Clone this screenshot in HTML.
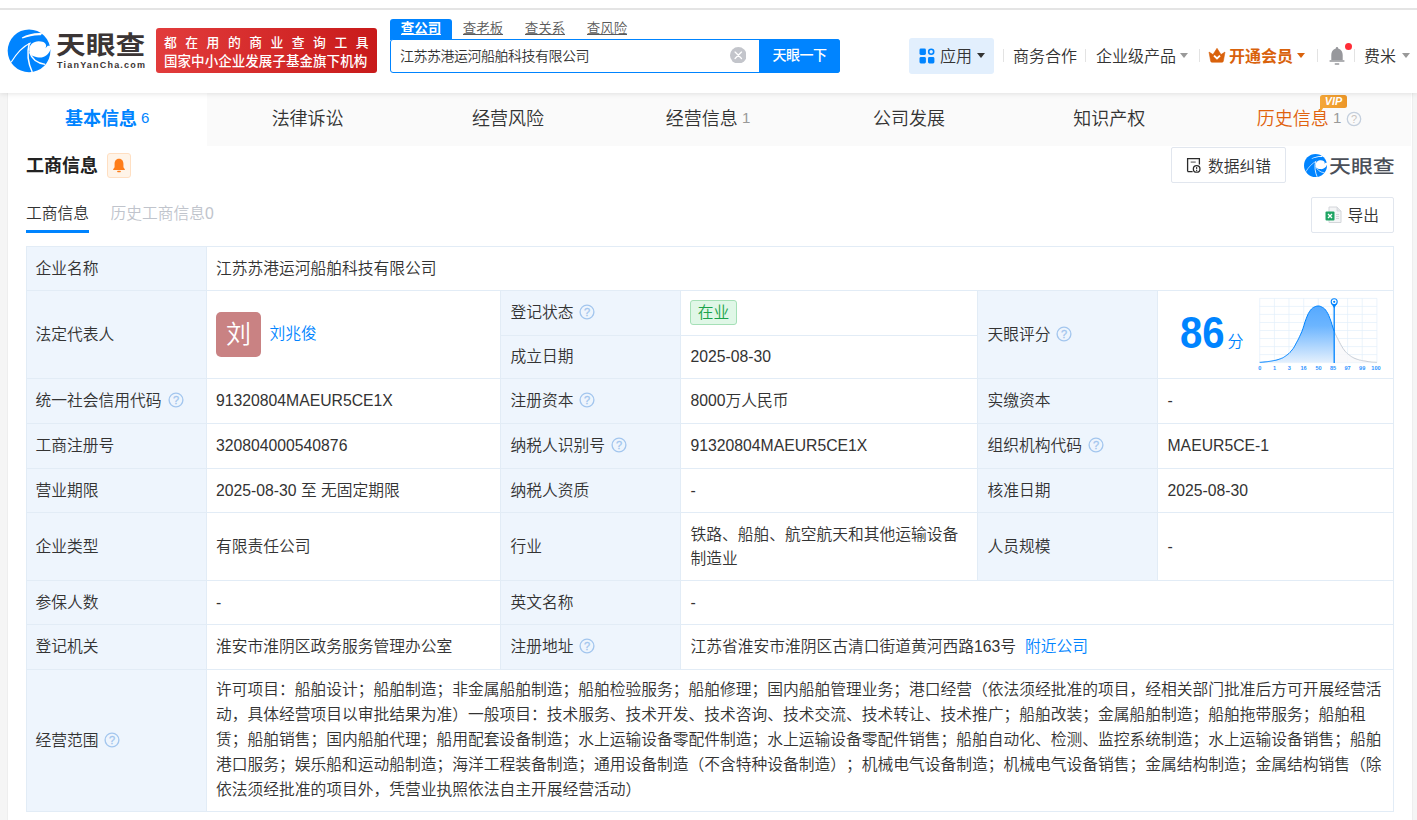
<!DOCTYPE html>
<html lang="zh-CN">
<head>
<meta charset="utf-8">
<title>天眼查</title>
<style>
*{box-sizing:border-box;margin:0;padding:0}
html,body{width:1417px;height:820px;overflow:hidden}
body{font-weight:350;text-spacing-trim:space-all;background:#f5f5f5;font-family:"Liberation Sans","Noto Sans CJK SC",sans-serif;color:#333;font-size:16px;position:relative}
.abs{position:absolute;white-space:nowrap}
#header{position:absolute;left:0;top:0;width:1417px;height:93px;background:#fff;box-shadow:0 1px 5px rgba(0,0,0,.10);z-index:5}
#topline{position:absolute;left:0;top:8px;width:1417px;height:2px;background:#e4e4e4}
#panel{position:absolute;left:7px;top:93px;width:1406px;height:727px;background:#fff;border-left:1px solid #eee;border-right:1px solid #eee}
#tabbar{position:absolute;left:0;top:0;width:1403px;height:53px;background:#fafafa}
#tabbar .act{position:absolute;left:0;top:0;width:199px;height:53px;background:#fff}
.tab{position:absolute;top:0;height:53px;line-height:53px;font-size:18px;color:#333;white-space:nowrap}

#logo{position:absolute;left:0;top:20px;width:80px;height:60px}
#wm{position:absolute;left:56px;top:26px;font-size:25.5px;transform:scaleX(1.165);font-weight:700;color:#3b3535;line-height:38px;letter-spacing:0;white-space:nowrap;transform-origin:0 50%}
#wm2{position:absolute;left:57px;top:59.2px;font-size:9px;font-weight:700;color:#3b3535;line-height:12px;letter-spacing:1.2px;white-space:nowrap}
#banner{position:absolute;left:156px;top:28px;width:221px;height:45px;border-radius:3px;background:linear-gradient(90deg,#e23c3c,#c81a1a);color:#fff;font-weight:700}
#banner div{position:absolute;left:8px;white-space:nowrap;line-height:18px}
#b1{top:5.5px;font-size:12.8px;letter-spacing:8.5px;font-weight:500}
#b2{top:24.5px;font-size:13.5px;letter-spacing:.05px;font-weight:500}
.stab{position:absolute;top:19px;height:21px;width:62px;text-align:center;font-size:13.5px;line-height:20px;color:#5a5a5a;letter-spacing:0}
.stab u{text-decoration:none;display:inline-block;line-height:10.6px;border-bottom:1px solid currentColor;vertical-align:middle;position:relative;top:0px}
#st1{left:390px;background:#0084ff;color:#fff;font-weight:700;border-radius:3px 3px 0 0}
#sbox{position:absolute;left:390px;top:39px;width:450px;height:34px;border:1.5px solid #0084ff;border-radius:3px;background:#fff}
#sbox .q{position:absolute;left:9px;top:.5px;line-height:31px;font-size:14px;letter-spacing:-.5px;color:#333;white-space:nowrap}
#sbtn{position:absolute;left:759px;top:39px;width:81px;height:34px;background:#0084ff;color:#fff;font-size:14px;font-weight:500;text-align:center;line-height:33px;border-radius:0 3px 3px 0;letter-spacing:-.5px}
#sclr{position:absolute;left:729.5px;top:46.8px;width:16.6px;height:16.6px}
.nav{position:absolute;top:44.5px;line-height:24px;font-size:16px;color:#333;white-space:nowrap}
.sep{position:absolute;top:49px;width:1px;height:13px;background:#e3e3e3}
.caret{position:absolute;top:53px;width:0;height:0;border-left:4px solid transparent;border-right:4px solid transparent;border-top:5px solid #999}
#app{position:absolute;left:909px;top:38px;width:85px;height:36px;background:#e2effd;border-radius:3px}
.t{position:absolute;white-space:nowrap;font-size:15.75px;line-height:24px;color:#333;font-weight:350}
.hi{position:absolute;width:16px;height:16px}
.cnt{font-size:15px;font-weight:400;position:relative;top:-1.6px}
.cnt.g{color:#999}
.tab{text-align:center}
#vip{position:absolute;left:1312px;top:2.2px;width:27px;height:12.8px;background:linear-gradient(90deg,#f5a838,#ec9628);color:#fff;font-size:10.8px;font-weight:700;font-style:italic;line-height:13px;text-align:center;border-radius:2.5px;z-index:2;font-family:"Liberation Sans",sans-serif;letter-spacing:0}
#vip:after{content:"";position:absolute;left:0;top:10px;border-left:0 solid transparent;border-right:5px solid transparent;border-top:8px solid #f3a535}
.h1{position:absolute;white-space:nowrap;font-size:18px;font-weight:700;line-height:26px;color:#222}
#bellbox{position:absolute;width:24px;height:24.5px;border:1px solid #ffdfc2;background:#fff4e8;border-radius:3px;padding:4px}
#bellbox svg{display:block}
.btn{position:absolute;border:1px solid #e1e6ee;border-radius:2px;background:#fff}
.wm3{position:absolute;white-space:nowrap;font-size:18.5px;font-weight:500;color:#4b4f58;line-height:26px;transform:scaleX(1.185);transform-origin:0 50%}
#tbl{position:absolute}
#tbl .c{position:absolute;border:1px solid #e2ecf6;background:#fff}
#tbl .c.lb{background:#eef5fd}
#ava{position:absolute;width:45px;height:45px;border-radius:5px;background:#c98283;color:#fff;font-size:25px;line-height:44px;text-align:center}
#tag{position:absolute;width:47px;height:25px;border:1px solid #a5e0b7;background:#e0f7e7;color:#1aa34a;font-size:15.75px;line-height:23px;text-align:center;border-radius:3px}
#score{position:absolute;transform:scaleX(.9);transform-origin:0 50%;font-size:44.5px;font-weight:700;color:#0084ff;line-height:48px;white-space:nowrap;font-family:"Liberation Sans",sans-serif}
</style>
</head>
<body>
<div id="header">
  <div id="topline"></div>
  <svg id="logo" viewBox="0 0 1093 820" preserveAspectRatio="none">
    <circle cx="397" cy="421" r="292" fill="#0084ff"/>
    <g id="swirl" fill="none" stroke="#fff" stroke-linecap="butt"><path d="M400,425 C392,338 455,290 530,290 C605,290 652,328 621,386 L652,352 L705,352 L705,402 L690,400 C672,468 602,520 530,513 C462,508 406,482 400,425Z" fill="#fff" stroke="none"/><path d="M420,310 C320,358 222,458 152,578" stroke-width="16"/><path d="M400,318 C366,450 388,598 440,710" stroke-width="21"/><path d="M404,440 C436,540 518,590 616,606" stroke-width="18"/><path d="M298,240 C380,196 470,172 580,180 L556,208 C470,204 390,222 306,252Z" fill="#fff" stroke="none"/></g>
  </svg>
  <div id="wm">天眼查</div>
  <div id="wm2">TianYanCha.com</div>
  <div id="banner"><div id="b1">都在用的商业查询工具</div><div id="b2">国家中小企业发展子基金旗下机构</div></div>
  <div class="stab" id="st1"><u>查公司</u></div>
  <div class="stab" style="left:452px"><u>查老板</u></div>
  <div class="stab" style="left:514px"><u>查关系</u></div>
  <div class="stab" style="left:576px"><u>查风险</u></div>
  <div id="sbox"><div class="q">江苏苏港运河船舶科技有限公司</div></div>
  <svg id="sclr" viewBox="0 0 16 16"><circle cx="8" cy="8" r="8" fill="#c3c5cb"/><path d="M4.9,4.9L11.1,11.1M11.1,4.9L4.9,11.1" stroke="#fff" stroke-width="1.25" stroke-linecap="round"/></svg>
  <div id="sbtn">天眼一下</div>
  <div id="app"></div>
  <svg class="abs" style="left:919px;top:48px;width:16px;height:16px" viewBox="0 0 16 16"><rect x="0.5" y="0.5" width="6.4" height="6.4" rx="1.4" fill="#0084ff"/><rect x="0.5" y="9" width="6.4" height="6.4" rx="1.4" fill="#0084ff"/><rect x="9" y="9" width="6.4" height="6.4" rx="1.4" fill="#0084ff"/><circle cx="12.2" cy="3.7" r="2.5" fill="none" stroke="#0084ff" stroke-width="1.6"/></svg>
  <div class="nav" style="left:940px">应用</div>
  <div class="caret" style="left:977px;border-top-color:#333"></div>
  <div class="sep" style="left:1003px"></div>
  <div class="nav" style="left:1013px">商务合作</div>
  <div class="sep" style="left:1085px"></div>
  <div class="nav" style="left:1096px">企业级产品</div>
  <div class="caret" style="left:1180px"></div>
  <div class="sep" style="left:1199px"></div>
  <svg class="abs" style="left:1208px;top:47px;width:18px;height:17px" viewBox="0 0 18 17"><path d="M1,5 L5,7.6 L9,1.3 L13,7.6 L17,5 L15.3,14.2 Q15.1,15.2 14.1,15.2 H3.9 Q2.9,15.2 2.7,14.2Z" fill="#d9620c" stroke="#d9620c" stroke-width=".6" stroke-linejoin="round"/><path d="M6,8.6 L9,11.5 L12,8.6" fill="none" stroke="#fff" stroke-width="1.9"/></svg>
  <div class="nav" style="left:1229px;color:#d9620c;font-weight:700">开通会员</div>
  <div class="caret" style="left:1297px;border-top-color:#d9620c"></div>
  <div class="sep" style="left:1317px"></div>
  <svg class="abs" style="left:1328px;top:46px;width:18px;height:20px" viewBox="0 0 18 20"><path d="M9,1 C8.2,1 7.8,1.6 7.8,2.4 C4.6,3.2 3.3,6 3.3,9 V14.3 H14.7 V9 C14.7,6 13.4,3.2 10.2,2.4 C10.2,1.6 9.8,1 9,1Z" fill="#97989c"/><rect x="1.4" y="14.2" width="15.2" height="1.5" rx=".7" fill="#97989c"/><rect x="6.6" y="17.2" width="4.8" height="1.5" rx=".7" fill="#97989c"/></svg>
  <div class="abs" style="left:1345px;top:42.5px;width:7px;height:7px;border-radius:50%;background:#ff2d37"></div>
  <div class="sep" style="left:1354px"></div>
  <div class="nav" style="left:1364px">费米</div>
  <div class="caret" style="left:1402px"></div>
</div>
<div id="panel">
<div id="tabbar"><div class="act"></div>
<div class="tab" style="left:-1px;width:200.429px;color:#0084ff"><b>基本信息</b><span class="cnt"> 6</span></div>
<div class="tab" style="left:199.429px;width:200.429px;">法律诉讼</div>
<div class="tab" style="left:399.857px;width:200.429px;">经营风险</div>
<div class="tab" style="left:599.786px;width:200.429px;">经营信息<span class="cnt g"> 1</span></div>
<div class="tab" style="left:800.714px;width:200.429px;">公司发展</div>
<div class="tab" style="left:1001.14px;width:200.429px;">知识产权</div>
<div class="tab" style="left:1200.37px;width:200.429px;"><span style="color:#e0620d">历史信息</span><span class="cnt g"> 1</span><span style="display:inline-block;width:19px"></span></div>
</div>
<div id="vip">VIP</div>
<svg class="hi" style="left:1338px;top:18px" viewBox="0 0 16 16"><circle cx="8" cy="8" r="6.7" fill="none" stroke="#c4cfdd" stroke-width="1.3"/><text x="8" y="11.6" text-anchor="middle" font-size="11" fill="#c9c4c0" font-family="Liberation Sans,sans-serif">?</text></svg>
<div class="h1" style="left:18px;top:59.8px;">工商信息</div>
<div id="bellbox" style="left:99px;top:60px"><svg viewBox="1 .6 12 12.6" width="14" height="14.7"><path d="M7,1.2 C4.3,1.2 3.2,3.4 3.2,5.6 V8.6 L2,10.3 V10.8 H12 V10.3 L10.8,8.6 V5.6 C10.8,3.4 9.7,1.2 7,1.2Z" fill="#ff7d18"/><rect x="5.4" y="11.6" width="3.2" height="1.2" rx=".6" fill="#ff7d18"/></svg></div>
<div class="btn" style="left:1163px;top:54px;width:115px;height:36px"></div>
<svg class="abs" style="left:1178px;top:64px;width:16px;height:17px" viewBox="0 0 16 17"><path d="M1.6,14.6 V1.6 H13.4 V7.6 M1.6,14.6 H6.6" fill="none" stroke="#2b2b2b" stroke-width="1.3"/><path d="M4.7,5.1 H9.7" stroke="#777" stroke-width="1.3"/><circle cx="10.65" cy="11.9" r="3.3" fill="#fff" stroke="#2b2b2b" stroke-width="1.3"/><path d="M10.65,10.1 V12.3 M10.65,13.1 V13.9" stroke="#2b2b2b" stroke-width="1.1"/></svg>
<div class="t" style="left:1200px;top:61.5px;color:#333">数据纠错</div>
<svg class="abs" style="left:1295.5px;top:60.8px;width:23px;height:23px" viewBox="105 129 584 584"><circle cx="397" cy="421" r="292" fill="#0084ff"/><use href="#swirl"/></svg>
<div class="wm3" style="left:1321px;top:60.5px;">天眼查</div>
<div class="btn" style="left:1303px;top:104px;width:83px;height:36px"></div>
<svg class="abs" style="left:1316.5px;top:112.5px;width:17px;height:18px" viewBox="0 0 17 18"><path d="M4,1 H12 L16,5 V16.5 H4Z" fill="#f4f5f6" stroke="#d3d6da" stroke-width="1"/><path d="M12,1 V5 H16" fill="#e3e5e8" stroke="#d3d6da" stroke-width=".8"/><path d="M11,8.5H14M11,10.5H14M11,12.5H14" stroke="#cfd2d6" stroke-width=".9"/><rect x="0.5" y="5.5" width="9" height="9" rx="1" fill="#1fa463"/><path d="M3,8 L7,12 M7,8 L3,12" stroke="#fff" stroke-width="1.3"/></svg>
<div class="t" style="left:1339.5px;top:110.5px;">导出</div>
<div class="t" style="left:18px;top:108.7px;color:#333">工商信息</div>
<div class="abs" style="left:18px;top:137px;width:63px;height:3px;background:#0084ff"></div>
<div class="t" style="left:102.5px;top:108.7px;color:#c0c4cc">历史工商信息0</div>
<div id="tbl" style="left:18px;top:153px;width:1368px;height:566px">
<div class="c lb" style="left:0px;top:0px;width:181px;height:45px"></div>
<div class="c" style="left:180px;top:0px;width:1188px;height:45px"></div>
<div class="c lb" style="left:0px;top:44px;width:181px;height:89px"></div>
<div class="c" style="left:180px;top:44px;width:295px;height:89px"></div>
<div class="c lb" style="left:474px;top:44px;width:181px;height:46px"></div>
<div class="c" style="left:654px;top:44px;width:298px;height:46px"></div>
<div class="c lb" style="left:474px;top:89px;width:181px;height:44px"></div>
<div class="c" style="left:654px;top:89px;width:298px;height:44px"></div>
<div class="c lb" style="left:951px;top:44px;width:181px;height:89px"></div>
<div class="c" style="left:1131px;top:44px;width:237px;height:89px"></div>
<div class="c lb" style="left:0px;top:132px;width:181px;height:46px"></div>
<div class="c" style="left:180px;top:132px;width:295px;height:46px"></div>
<div class="c lb" style="left:474px;top:132px;width:181px;height:46px"></div>
<div class="c" style="left:654px;top:132px;width:298px;height:46px"></div>
<div class="c lb" style="left:951px;top:132px;width:181px;height:46px"></div>
<div class="c" style="left:1131px;top:132px;width:237px;height:46px"></div>
<div class="c lb" style="left:0px;top:177px;width:181px;height:46px"></div>
<div class="c" style="left:180px;top:177px;width:295px;height:46px"></div>
<div class="c lb" style="left:474px;top:177px;width:181px;height:46px"></div>
<div class="c" style="left:654px;top:177px;width:298px;height:46px"></div>
<div class="c lb" style="left:951px;top:177px;width:181px;height:46px"></div>
<div class="c" style="left:1131px;top:177px;width:237px;height:46px"></div>
<div class="c lb" style="left:0px;top:222px;width:181px;height:45px"></div>
<div class="c" style="left:180px;top:222px;width:295px;height:45px"></div>
<div class="c lb" style="left:474px;top:222px;width:181px;height:45px"></div>
<div class="c" style="left:654px;top:222px;width:298px;height:45px"></div>
<div class="c lb" style="left:951px;top:222px;width:181px;height:45px"></div>
<div class="c" style="left:1131px;top:222px;width:237px;height:45px"></div>
<div class="c lb" style="left:0px;top:266px;width:181px;height:69px"></div>
<div class="c" style="left:180px;top:266px;width:295px;height:69px"></div>
<div class="c lb" style="left:474px;top:266px;width:181px;height:69px"></div>
<div class="c" style="left:654px;top:266px;width:298px;height:69px"></div>
<div class="c lb" style="left:951px;top:266px;width:181px;height:69px"></div>
<div class="c" style="left:1131px;top:266px;width:237px;height:69px"></div>
<div class="c lb" style="left:0px;top:334px;width:181px;height:45px"></div>
<div class="c" style="left:180px;top:334px;width:295px;height:45px"></div>
<div class="c lb" style="left:474px;top:334px;width:181px;height:45px"></div>
<div class="c" style="left:654px;top:334px;width:714px;height:45px"></div>
<div class="c lb" style="left:0px;top:378px;width:181px;height:46px"></div>
<div class="c" style="left:180px;top:378px;width:295px;height:46px"></div>
<div class="c lb" style="left:474px;top:378px;width:181px;height:46px"></div>
<div class="c" style="left:654px;top:378px;width:714px;height:46px"></div>
<div class="c lb" style="left:0px;top:423px;width:181px;height:143px"></div>
<div class="c" style="left:180px;top:423px;width:1188px;height:143px"></div>
</div>
<div class="t" style="left:27.5px;top:163.5px;">企业名称</div>
<div class="t" style="left:208px;top:163.5px;">江苏苏港运河船舶科技有限公司</div>
<div class="t" style="left:27.5px;top:229.5px;">法定代表人</div>
<div id="ava" style="left:208px;top:219px">刘</div>
<div class="t" style="left:261.5px;top:228.5px;color:#0084ff">刘兆俊</div>
<div class="t" style="left:502.5px;top:208px;">登记状态</div>
<svg class="hi" style="left:571px;top:210.8px" viewBox="0 0 16 16"><circle cx="8" cy="8" r="6.9" fill="none" stroke="#a3c6ee" stroke-width="1.35"/><text x="8" y="11.8" text-anchor="middle" font-size="11" fill="#a3c6ee" stroke="#a3c6ee" stroke-width=".3" font-family="Liberation Sans,sans-serif">?</text></svg>
<div id="tag" style="left:682px;top:207px">在业</div>
<div class="t" style="left:502.5px;top:252px;">成立日期</div>
<div class="t" style="left:682.5px;top:252px;">2025-08-30</div>
<div class="t" style="left:979.5px;top:229.5px;">天眼评分</div>
<svg class="hi" style="left:1048.3px;top:233.1px" viewBox="0 0 16 16"><circle cx="8" cy="8" r="6.9" fill="none" stroke="#a3c6ee" stroke-width="1.35"/><text x="8" y="11.8" text-anchor="middle" font-size="11" fill="#a3c6ee" stroke="#a3c6ee" stroke-width=".3" font-family="Liberation Sans,sans-serif">?</text></svg>
<div class="t" style="left:27.5px;top:296px;">统一社会信用代码</div>
<svg class="hi" style="left:159.5px;top:298.8px" viewBox="0 0 16 16"><circle cx="8" cy="8" r="6.9" fill="none" stroke="#a3c6ee" stroke-width="1.35"/><text x="8" y="11.8" text-anchor="middle" font-size="11" fill="#a3c6ee" stroke="#a3c6ee" stroke-width=".3" font-family="Liberation Sans,sans-serif">?</text></svg>
<div class="t" style="left:208px;top:296px;">91320804MAEUR5CE1X</div>
<div class="t" style="left:502.5px;top:296px;">注册资本</div>
<svg class="hi" style="left:571px;top:298.8px" viewBox="0 0 16 16"><circle cx="8" cy="8" r="6.9" fill="none" stroke="#a3c6ee" stroke-width="1.35"/><text x="8" y="11.8" text-anchor="middle" font-size="11" fill="#a3c6ee" stroke="#a3c6ee" stroke-width=".3" font-family="Liberation Sans,sans-serif">?</text></svg>
<div class="t" style="left:682.5px;top:296px;">8000万人民币</div>
<div class="t" style="left:979.5px;top:296px;">实缴资本</div>
<div class="t" style="left:1159.5px;top:296px;">-</div>
<div class="t" style="left:27.5px;top:341px;">工商注册号</div>
<div class="t" style="left:208px;top:341px;">320804000540876</div>
<div class="t" style="left:502.5px;top:341px;">纳税人识别号</div>
<svg class="hi" style="left:602.5px;top:343.8px" viewBox="0 0 16 16"><circle cx="8" cy="8" r="6.9" fill="none" stroke="#a3c6ee" stroke-width="1.35"/><text x="8" y="11.8" text-anchor="middle" font-size="11" fill="#a3c6ee" stroke="#a3c6ee" stroke-width=".3" font-family="Liberation Sans,sans-serif">?</text></svg>
<div class="t" style="left:682.5px;top:341px;">91320804MAEUR5CE1X</div>
<div class="t" style="left:979.5px;top:341px;">组织机构代码</div>
<svg class="hi" style="left:1079.5px;top:343.8px" viewBox="0 0 16 16"><circle cx="8" cy="8" r="6.9" fill="none" stroke="#a3c6ee" stroke-width="1.35"/><text x="8" y="11.8" text-anchor="middle" font-size="11" fill="#a3c6ee" stroke="#a3c6ee" stroke-width=".3" font-family="Liberation Sans,sans-serif">?</text></svg>
<div class="t" style="left:1159.5px;top:341px;">MAEUR5CE-1</div>
<div class="t" style="left:27.5px;top:385.5px;">营业期限</div>
<div class="t" style="left:208px;top:385.5px;">2025-08-30 至 无固定期限</div>
<div class="t" style="left:502.5px;top:385.5px;">纳税人资质</div>
<div class="t" style="left:682.5px;top:385.5px;">-</div>
<div class="t" style="left:979.5px;top:385.5px;">核准日期</div>
<div class="t" style="left:1159.5px;top:385.5px;">2025-08-30</div>
<div class="t" style="left:27.5px;top:441.5px;">企业类型</div>
<div class="t" style="left:208px;top:441.5px;">有限责任公司</div>
<div class="t" style="left:502.5px;top:441.5px;">行业</div>
<div class="t" style="left:682.5px;top:429.5px;">铁路、船舶、航空航天和其他运输设备</div>
<div class="t" style="left:682.5px;top:453.5px;">制造业</div>
<div class="t" style="left:979.5px;top:441.5px;">人员规模</div>
<div class="t" style="left:1159.5px;top:441.5px;">-</div>
<div class="t" style="left:27.5px;top:497.5px;">参保人数</div>
<div class="t" style="left:208px;top:497.5px;">-</div>
<div class="t" style="left:502.5px;top:497.5px;">英文名称</div>
<div class="t" style="left:682.5px;top:497.5px;">-</div>
<div class="t" style="left:27.5px;top:542px;">登记机关</div>
<div class="t" style="left:208px;top:542px;">淮安市淮阴区政务服务管理办公室</div>
<div class="t" style="left:502.5px;top:542px;">注册地址</div>
<svg class="hi" style="left:571px;top:544.8px" viewBox="0 0 16 16"><circle cx="8" cy="8" r="6.9" fill="none" stroke="#a3c6ee" stroke-width="1.35"/><text x="8" y="11.8" text-anchor="middle" font-size="11" fill="#a3c6ee" stroke="#a3c6ee" stroke-width=".3" font-family="Liberation Sans,sans-serif">?</text></svg>
<div class="t" style="left:682.5px;top:542px;">江苏省淮安市淮阴区古清口街道黄河西路163号<span style="color:#0084ff;margin-left:9px">附近公司</span></div>
<div class="t" style="left:27.5px;top:635.5px;">经营范围</div>
<svg class="hi" style="left:96.3px;top:639px" viewBox="0 0 16 16"><circle cx="8" cy="8" r="6.9" fill="none" stroke="#a3c6ee" stroke-width="1.35"/><text x="8" y="11.8" text-anchor="middle" font-size="11" fill="#a3c6ee" stroke="#a3c6ee" stroke-width=".3" font-family="Liberation Sans,sans-serif">?</text></svg>
<div class="t" style="left:208px;top:585.3px;">许可项目：船舶设计；船舶制造；非金属船舶制造；船舶检验服务；船舶修理；国内船舶管理业务；港口经营（依法须经批准的项目，经相关部门批准后方可开展经营活</div>
<div class="t" style="left:208px;top:610.1px;">动，具体经营项目以审批结果为准）一般项目：技术服务、技术开发、技术咨询、技术交流、技术转让、技术推广；船舶改装；金属船舶制造；船舶拖带服务；船舶租</div>
<div class="t" style="left:208px;top:634.9px;">赁；船舶销售；国内船舶代理；船用配套设备制造；水上运输设备零配件制造；水上运输设备零配件销售；船舶自动化、检测、监控系统制造；水上运输设备销售；船舶</div>
<div class="t" style="left:208px;top:659.7px;">港口服务；娱乐船和运动船制造；海洋工程装备制造；通用设备制造（不含特种设备制造）；机械电气设备制造；机械电气设备销售；金属结构制造；金属结构销售（除</div>
<div class="t" style="left:208px;top:684.5px;">依法须经批准的项目外，凭营业执照依法自主开展经营活动）</div>
<svg class="abs" id="chart" style="left:1242px;top:197px;width:140px;height:88px" viewBox="0 0 140 88"><defs><linearGradient id="bg1" x1="0" y1="0" x2="0" y2="1"><stop offset="0" stop-color="#55a9ff"/><stop offset=".35" stop-color="#6cb5ff"/><stop offset="1" stop-color="#e4f0fd"/></linearGradient></defs><path d="M9.7,8.4V72.6M9.7,8.4H126.9M24.4,8.4V72.6M9.7,16.4H126.9M39.0,8.4V72.6M9.7,24.4H126.9M53.7,8.4V72.6M9.7,32.5H126.9M68.3,8.4V72.6M9.7,40.5H126.9M83.0,8.4V72.6M9.7,48.5H126.9M97.6,8.4V72.6M9.7,56.6H126.9M112.2,8.4V72.6M9.7,64.6H126.9M126.9,8.4V72.6M9.7,72.6H126.9" stroke="#e3effb" stroke-width=".7" fill="none"/><polygon points="84.2,72.6 84.2,41.2 85.3,43.8 86.4,46.2 87.5,48.4 88.6,50.5 89.7,52.6 90.8,54.7 91.9,56.6 93.0,58.4 94.1,59.9 95.1,61.2 96.2,62.4 97.3,63.5 98.4,64.4 99.5,65.2 100.6,66.0 101.7,66.8 102.8,67.4 103.9,68.0 105.0,68.5 106.1,68.9 107.2,69.3 108.3,69.6 109.4,70.0 110.5,70.2 111.6,70.5 112.7,70.7 113.8,70.9 114.9,71.0 116.0,71.2 117.0,71.4 118.1,71.6 119.2,71.7 120.3,71.8 121.4,72.0 122.5,72.1 123.6,72.2 124.7,72.2 125.8,72.3 126.9,72.3 126.9,72.6" fill="#f7f8fa" opacity=".8"/><polyline points="84.2,41.2 85.3,43.8 86.4,46.2 87.5,48.4 88.6,50.5 89.7,52.6 90.8,54.7 91.9,56.6 93.0,58.4 94.1,59.9 95.1,61.2 96.2,62.4 97.3,63.5 98.4,64.4 99.5,65.2 100.6,66.0 101.7,66.8 102.8,67.4 103.9,68.0 105.0,68.5 106.1,68.9 107.2,69.3 108.3,69.6 109.4,70.0 110.5,70.2 111.6,70.5 112.7,70.7 113.8,70.9 114.9,71.0 116.0,71.2 117.0,71.4 118.1,71.6 119.2,71.7 120.3,71.8 121.4,72.0 122.5,72.1 123.6,72.2 124.7,72.2 125.8,72.3 126.9,72.3" fill="none" stroke="#c6cdd6" stroke-width="1"/><polygon points="9.7,72.6 9.7,72.3 10.8,72.3 11.9,72.2 12.9,72.1 14.0,72.0 15.1,71.9 16.2,71.8 17.3,71.7 18.3,71.5 19.4,71.4 20.5,71.2 21.6,71.0 22.7,70.8 23.7,70.6 24.8,70.4 25.9,70.2 27.0,69.9 28.1,69.6 29.1,69.2 30.2,68.9 31.3,68.4 32.4,68.0 33.5,67.4 34.5,66.7 35.6,66.0 36.7,65.2 37.8,64.4 38.9,63.5 39.9,62.4 41.0,61.3 42.1,59.9 43.2,58.5 44.3,56.8 45.3,54.9 46.4,52.8 47.5,50.8 48.6,48.7 49.6,46.5 50.7,44.2 51.8,41.7 52.9,38.7 54.0,35.3 55.0,31.9 56.1,28.9 57.2,26.1 58.3,23.6 59.4,21.8 60.4,20.3 61.5,19.0 62.6,18.0 63.7,17.3 64.8,16.8 65.8,16.4 66.9,16.1 68.0,16.0 69.1,16.0 70.2,16.3 71.2,16.7 72.3,17.3 73.4,17.9 74.5,18.8 75.6,20.0 76.6,21.5 77.7,23.3 78.8,25.6 79.9,28.4 81.0,31.4 82.0,34.7 83.1,38.1 84.2,41.2 84.2,72.6" fill="url(#bg1)"/><polyline points="9.7,72.3 10.8,72.3 11.9,72.2 12.9,72.1 14.0,72.0 15.1,71.9 16.2,71.8 17.3,71.7 18.3,71.5 19.4,71.4 20.5,71.2 21.6,71.0 22.7,70.8 23.7,70.6 24.8,70.4 25.9,70.2 27.0,69.9 28.1,69.6 29.1,69.2 30.2,68.9 31.3,68.4 32.4,68.0 33.5,67.4 34.5,66.7 35.6,66.0 36.7,65.2 37.8,64.4 38.9,63.5 39.9,62.4 41.0,61.3 42.1,59.9 43.2,58.5 44.3,56.8 45.3,54.9 46.4,52.8 47.5,50.8 48.6,48.7 49.6,46.5 50.7,44.2 51.8,41.7 52.9,38.7 54.0,35.3 55.0,31.9 56.1,28.9 57.2,26.1 58.3,23.6 59.4,21.8 60.4,20.3 61.5,19.0 62.6,18.0 63.7,17.3 64.8,16.8 65.8,16.4 66.9,16.1 68.0,16.0 69.1,16.0 70.2,16.3 71.2,16.7 72.3,17.3 73.4,17.9 74.5,18.8 75.6,20.0 76.6,21.5 77.7,23.3 78.8,25.6 79.9,28.4 81.0,31.4 82.0,34.7 83.1,38.1 84.2,41.2" fill="none" stroke="#0084ff" stroke-width="1"/><path d="M84.2,15.0V72.9" stroke="#0084ff" stroke-width="1.3"/><path d="M81.6,14.0 L84.2,18.3 L86.8,14.0Z" fill="#0084ff"/><circle cx="84.2" cy="11.8" r="3" fill="#fff" stroke="#0084ff" stroke-width="1.1"/><circle cx="84.2" cy="11.8" r="1.1" fill="#0084ff"/><text x="9.7" y="80.3" text-anchor="middle" font-size="5.6" font-weight="700" fill="#2f95ff" font-family="Liberation Sans,sans-serif">0</text><text x="24.5" y="80.3" text-anchor="middle" font-size="5.6" font-weight="700" fill="#2f95ff" font-family="Liberation Sans,sans-serif">1</text><text x="39.4" y="80.3" text-anchor="middle" font-size="5.6" font-weight="700" fill="#2f95ff" font-family="Liberation Sans,sans-serif">3</text><text x="53.5" y="80.3" text-anchor="middle" font-size="5.6" font-weight="700" fill="#2f95ff" font-family="Liberation Sans,sans-serif">16</text><text x="68.5" y="80.3" text-anchor="middle" font-size="5.6" font-weight="700" fill="#2f95ff" font-family="Liberation Sans,sans-serif">50</text><text x="83.0" y="80.3" text-anchor="middle" font-size="5.6" font-weight="700" fill="#2f95ff" font-family="Liberation Sans,sans-serif">85</text><text x="97.6" y="80.3" text-anchor="middle" font-size="5.6" font-weight="700" fill="#2f95ff" font-family="Liberation Sans,sans-serif">97</text><text x="112.2" y="80.3" text-anchor="middle" font-size="5.6" font-weight="700" fill="#2f95ff" font-family="Liberation Sans,sans-serif">99</text><text x="126.0" y="80.3" text-anchor="middle" font-size="5.6" font-weight="700" fill="#2f95ff" font-family="Liberation Sans,sans-serif">100</text></svg>
<div id="score" style="left:1172px;top:216.3px">86</div>
<div class="t" style="left:1219.5px;top:236.8px;color:#0084ff;font-size:16px">分</div>
</div>
</body>
</html>
